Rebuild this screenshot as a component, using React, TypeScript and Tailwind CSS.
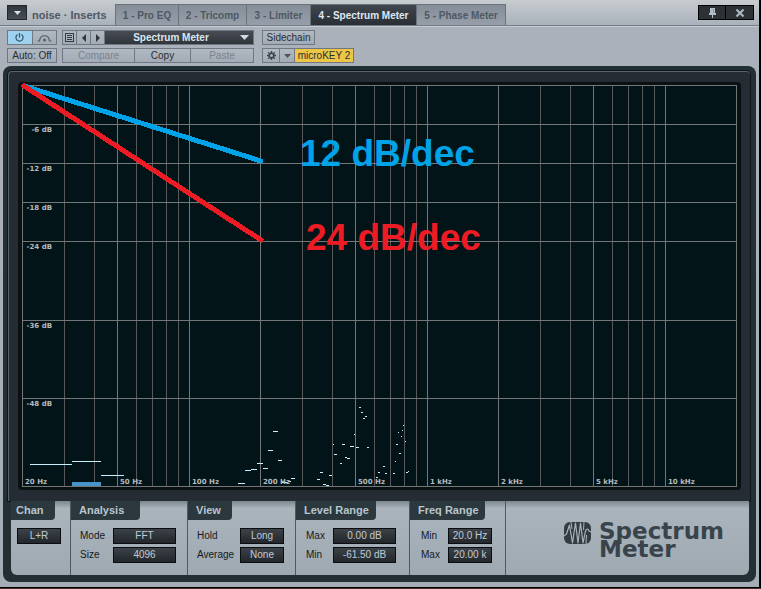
import { clsx } from "clsx";

const inserts = [
  { name: "1 - Pro EQ", width: "w-[63px]" },
  { name: "2 - Tricomp", width: "w-[68px]" },
  { name: "3 - Limiter", width: "w-[64px]" },
  { name: "4 - Spectrum Meter", width: "w-[106px]", active: true },
  { name: "5 - Phase Meter", width: "w-[89px]" },
];

const majorFreqs = [20, 50, 100, 200, 500, 1000, 2000, 5000, 10000, 20000];
const minorFreqs = [
  30, 40, 60, 70, 80, 90, 300, 400, 600, 700, 800, 900, 3000, 4000, 6000, 7000,
  8000, 9000,
];
const levels = [0, -6, -12, -18, -24, -36, -48, -61.5];

// measured bins: [start, y, length]
const trace = [
  [30, 464, 42], [72, 461, 29], [101, 475, 23], [238, 483, 7], [245, 470, 6],
  [251, 469, 6], [257, 463, 6], [263, 468, 5], [268, 450, 5], [273, 431, 5],
  [278, 460, 4], [282, 482, 6], [288, 481, 3], [291, 478, 4], [317, 479, 3],
  [320, 472, 3], [323, 484, 3], [326, 485, 3], [329, 475, 3], [333, 444, 1],
  [334, 454, 3], [340, 463, 2], [342, 444, 3], [345, 457, 2], [347, 458, 3],
  [350, 446, 4], [354, 434, 1], [356, 447, 3], [359, 407, 2], [361, 412, 2],
  [363, 418, 2], [365, 416, 2], [367, 447, 2], [376, 477, 2], [378, 472, 2],
  [383, 466, 2], [385, 473, 2], [393, 473, 2], [395, 461, 1], [396, 444, 2],
  [398, 432, 1], [399, 453, 2], [401, 436, 1], [402, 430, 1], [403, 425, 1],
  [405, 441, 1], [406, 472, 2], [408, 471, 1],
];

const freqX = (hz: number) => Math.ceil(22 + (714 * Math.log10(hz / 20)) / 3 - 0.01);
const levelY = (db: number) => Math.round(85 - db * 6.52);

const freqLabel = (hz: number) => (hz < 1000 ? `${hz} Hz` : `${hz / 1000} kHz`);

function Spectrum() {
  return (
    <svg
      viewBox="22 85 715 402"
      className="block h-auto w-full overflow-visible font-['DejaVu_Sans',sans-serif]"
    >
      <rect x="22" y="85" width="715" height="402" fill="#021417" />
      <g fill="#575959">
        {minorFreqs.map((hz) => (
          <rect key={hz} x={freqX(hz)} y="85" width="1" height="402" />
        ))}
      </g>
      <g fill="#747777">
        {levels.map((db) => (
          <rect key={db} x="22" y={levelY(db)} width="715" height="1" />
        ))}
        {majorFreqs.map((hz) => (
          <rect key={hz} x={freqX(hz)} y="85" width="1" height="402" />
        ))}
      </g>
      <rect x="72" y="482" width="29" height="4" fill="#4595c8" />
      <g fill="#c9efff">
        {trace.map(([x, y, w]) => (
          <rect key={x} x={x} y={y} width={w} height="1" />
        ))}
      </g>
      <g fill="#b4bbbf" fontSize="7" fontWeight="bold">
        {levels.slice(1, -1).map((db) => (
          <text key={db} x="52" y={levelY(db) + 8} textAnchor="end">
            {db} dB
          </text>
        ))}
        {majorFreqs.slice(0, -1).map((hz) => (
          <text key={hz} x={freqX(hz) + 3} y="484">
            {freqLabel(hz)}
          </text>
        ))}
      </g>
      <g strokeWidth="5" strokeLinecap="round" shapeRendering="crispEdges">
        <path d="M24 86L261 161" stroke="#00a2e8" />
        <path d="M24 86L261 240" stroke="#ed1c24" />
      </g>
      <g fontSize="37" fontWeight="bold" className="font-['Liberation_Sans',Arial,sans-serif]">
        <text x="300" y="166" fill="#00a2e8">12 dB/dec</text>
        <text x="306" y="250" fill="#ed1c24">24 dB/dec</text>
      </g>
    </svg>
  );
}

function Titlebar() {
  return (
    <header className="flex h-[26px] items-center border-b border-[#737b84] bg-linear-to-b from-[#c7cccf] to-[#a9b1bb] pr-[5px] pl-[7px]">
      <button
        aria-label="Window menu"
        className="flex h-[15px] w-5 items-center justify-center border border-[#23272c] bg-linear-to-b from-[#32363d] to-[#484d55]"
      >
        <svg width="7" height="4" viewBox="0 0 7 4">
          <path d="M0 0H7L3.5 4Z" fill="#d5e0e8" />
        </svg>
      </button>
      <h1 className="w-[88px] pt-1 pl-[5px] text-[11px] leading-4 font-bold whitespace-nowrap text-[#505861]">
        noise · Inserts
      </h1>
      <nav className="flex h-[21px] self-end border-t border-l border-[#6b737d]">
        {inserts.map((tab) => (
          <button
            key={tab.name}
            className={clsx(
              "border-r border-[#69717b] text-[10px] font-bold whitespace-nowrap",
              tab.width,
              tab.active
                ? "bg-linear-to-b from-[#41464e] to-[#2a2e35] text-[#dfe9f1]"
                : "bg-linear-to-b from-[#858e99] to-[#959ea9] text-[#505862]"
            )}
          >
            {tab.name}
          </button>
        ))}
      </nav>
      <div className="ml-auto flex h-[15px] divide-x divide-black border border-black bg-[#2c3136]">
        <button aria-label="Pin" className="flex w-[27px] items-center justify-center">
          <svg width="7" height="10" viewBox="0 0 7 10" fill="#b2bdc5">
            <path d="M1 0H6V5H7V7H0V5H1Z" />
            <path d="M3 7H4V10H3Z" />
            <path d="M4 1H5V5H4Z" fill="#8a959d" />
          </svg>
        </button>
        <button aria-label="Close" className="flex w-[27px] items-center justify-center">
          <svg width="8" height="8" viewBox="0 0 8 8" stroke="#aeb9c1" strokeWidth="2">
            <path d="M0.5 0.5L7.5 7.5M7.5 0.5L0.5 7.5" />
          </svg>
        </button>
      </div>
    </header>
  );
}

const group =
  "flex h-[15px] divide-x divide-[#6f7782] border border-[#6f7782] bg-linear-to-b from-[#b0b8c2] to-[#a3abb6]";

function Toolbar() {
  return (
    <div className="flex border-t border-[#c5cbd1] px-[7px] pt-[3px] pb-[3px] text-[10px] text-[#292e34]">
      <div className="mr-[5px] flex w-[50px] flex-col gap-[3px]">
        <div className={group}>
          <button aria-label="Power" className="flex flex-1 items-center justify-center bg-[#9ed2ef]">
            <svg width="9" height="9" viewBox="0 0 9 9" fill="none" stroke="#35556a" strokeWidth="1.2">
              <path d="M2.6 1.4A3.6 3.6 0 1 0 6.4 1.4M4.5 0V4.5" />
            </svg>
          </button>
          <button aria-label="Bypass" className="flex flex-1 items-center justify-center">
            <svg width="15" height="8" viewBox="0 0 15 8" fill="none" stroke="#555d67" strokeWidth="1.2">
              <path d="M0.5 7H2.5C3 0 12 0 12.5 7H14.5" />
              <circle cx="7.5" cy="6" r="1.5" fill="#555d67" stroke="none" />
            </svg>
          </button>
        </div>
        <button className="h-[15px] border border-[#6f7782] bg-linear-to-b from-[#b0b8c2] to-[#a3abb6] leading-3 whitespace-nowrap">
          Auto: Off
        </button>
      </div>

      <div className="mr-2 flex w-48 flex-col gap-[3px]">
        <div className={group}>
          <button aria-label="Preset list" className="flex w-[14px] items-center justify-center">
            <svg width="9" height="9" viewBox="0 0 9 9" fill="#333a42">
              <path d="M0 0H9V9H0ZM1 1V8H8V1Z" fillRule="evenodd" />
              <path d="M2 2H7V3H2ZM2 4H7V5H2ZM2 6H7V7H2Z" />
            </svg>
          </button>
          <button aria-label="Previous preset" className="flex w-[14px] items-center justify-center">
            <svg width="4" height="8" viewBox="0 0 4 8">
              <path d="M4 0V8L0 4Z" fill="#30363d" />
            </svg>
          </button>
          <button aria-label="Next preset" className="flex w-[14px] items-center justify-center">
            <svg width="4" height="8" viewBox="0 0 4 8">
              <path d="M0 0V8L4 4Z" fill="#30363d" />
            </svg>
          </button>
          <div className="relative flex-1 bg-linear-to-b from-[#484d55] to-[#30343b]">
            <select
              aria-label="Preset"
              className="block h-[13px] w-full appearance-none pr-4 text-[10px] leading-3 font-bold text-[#dce7ef] [text-align-last:center]"
            >
              <option>Spectrum Meter</option>
            </select>
            <svg
              width="9"
              height="5"
              viewBox="0 0 9 5"
              className="pointer-events-none absolute top-1 right-1"
            >
              <path d="M0 0H9L4.5 5Z" fill="#d0dbe3" />
            </svg>
          </div>
        </div>
        <div className={group}>
          <button disabled className="w-[72px] leading-3 text-[#7b838e]">Compare</button>
          <button className="w-14 leading-3">Copy</button>
          <button disabled className="flex-1 leading-3 text-[#7b838e]">Paste</button>
        </div>
      </div>

      <div className="flex flex-col items-start gap-[3px]">
        <button className="h-[15px] w-[53px] border border-[#6f7782] bg-linear-to-b from-[#b0b8c2] to-[#a3abb6] leading-3">
          Sidechain
        </button>
        <div className={group}>
          <button aria-label="Controller settings" className="flex w-[17px] items-center justify-center">
            <svg width="9" height="9" viewBox="0 0 9 9" stroke="#3c434b" fill="none">
              <circle cx="4.5" cy="4.5" r="2.3" strokeWidth="1.6" />
              <path
                d="M4.5 0V2M4.5 7V9M0 4.5H2M7 4.5H9M1.2 1.2L2.6 2.6M6.4 6.4L7.8 7.8M7.8 1.2L6.4 2.6M2.6 6.4L1.2 7.8"
                strokeWidth="1.3"
              />
            </svg>
          </button>
          <button aria-label="Controller menu" className="flex w-[15px] items-center justify-center">
            <svg width="7" height="4" viewBox="0 0 7 4">
              <path d="M0 0H7L3.5 4Z" fill="#4c535c" />
            </svg>
          </button>
          <button className="w-[58px] bg-[#edc646] leading-3 whitespace-nowrap">microKEY 2</button>
        </div>
      </div>
    </div>
  );
}

const valueBox =
  "block h-4 appearance-none border border-[#0b0e10] bg-linear-to-b from-[#3c4248] to-[#23272b] text-center text-[10px] leading-3 text-[#c0cbd4] [text-align-last:center]";

type FieldProps = { label: string; value: string; width: string; numeric?: boolean };

function Field({ label, value, width, numeric }: FieldProps) {
  return (
    <label className="flex items-center justify-between text-[10px] leading-4 text-[#15191d]">
      {label}
      {numeric ? (
        <input defaultValue={value} className={clsx(valueBox, width, "pb-px")} />
      ) : (
        <select className={clsx(valueBox, width)}>
          <option>{value}</option>
        </select>
      )}
    </label>
  );
}

type SectionProps = {
  title: string;
  width: string;
  tab: string;
  pad: string;
  children: React.ReactNode;
};

function Section({ title, width, tab, pad, children }: SectionProps) {
  return (
    <section className={clsx("border-r border-[#4e5962]", width)}>
      <h2
        className={clsx(
          "h-[19px] rounded-br-sm bg-[#2b383d] text-[11px] leading-[19px] font-bold whitespace-nowrap text-[#b9c6cd]",
          tab
        )}
      >
        {title}
      </h2>
      <div className={clsx("flex flex-col gap-[3px] pt-2", pad)}>{children}</div>
    </section>
  );
}

function Logo() {
  return (
    <div className="ml-auto flex gap-2 pt-[21px] pr-[25px]">
      <svg width="27" height="22" viewBox="0 0 27 22">
        <rect width="27" height="22" rx="6" fill="#343b42" />
        <path
          d="M0 14L2.500 12L5.500 3L8.500 21L11.500 1L14 21L16.500 1L19 21L21.500 9Q23.500 5 25 9L27 10"
          fill="none"
          stroke="#a9b2bb"
          strokeWidth="1.2"
          strokeLinejoin="round"
        />
        <path d="M7 0L8 7M20 0L19.500 8M22.500 13L22 22" stroke="#a9b2bb" strokeWidth="1" />
      </svg>
      <div className="font-['DejaVu_Sans',sans-serif] text-[23px] leading-[18px] font-bold text-[#39434a]">
        <div>Spectrum</div>
        <div>Meter</div>
      </div>
    </div>
  );
}

export default function App() {
  return (
    <div className="min-h-screen bg-[#3c3029] font-['Liberation_Sans',Arial,sans-serif]">
      <main className="border-r-2 border-b border-black bg-[#aab1bb]">
        <Titlebar />
        <Toolbar />
        <div className="bg-linear-to-b from-[#aab1bb] to-[#a4adb6] px-[3px] pb-[5px]">
          <div className="rounded-lg bg-[#222f33] pt-[5px] pr-[6px] pb-[7px] pl-[5px]">
            <div className="rounded-t-sm border-t border-l border-[#59646a] bg-[#262c33] pt-[10px] pr-[9px] pb-[11px] pl-[9px] shadow-[0_0_0_1px_#0e1619]">
              <div className="rounded-sm bg-[#0b1013] px-1 py-[3px]">
                <Spectrum />
              </div>
            </div>
            <footer className="mr-px ml-[3px] flex h-[74px] overflow-hidden rounded-b-md bg-linear-to-b from-[#7e878f] via-[#aab4bd] via-10% to-[#9fa9b2]">
              <Section title="Chan" width="w-[60px]" tab="w-11 pl-[5px]" pad="px-[6px]">
                <select aria-label="Channel" className={clsx(valueBox, "w-11")}>
                  <option>L+R</option>
                </select>
              </Section>
              <Section title="Analysis" width="w-[117px]" tab="w-[69px] pl-2" pad="pr-[11px] pl-[9px]">
                <Field label="Mode" value="FFT" width="w-[63px]" />
                <Field label="Size" value="4096" width="w-[63px]" />
              </Section>
              <Section title="View" width="w-[108px]" tab="w-11 pl-2" pad="pr-[11px] pl-[9px]">
                <Field label="Hold" value="Long" width="w-11" />
                <Field label="Average" value="None" width="w-11" />
              </Section>
              <Section title="Level Range" width="w-[114px]" tab="w-20 pl-2" pad="pr-[13px] pl-[10px]">
                <Field label="Max" value="0.00 dB" width="w-[63px]" numeric />
                <Field label="Min" value="-61.50 dB" width="w-[63px]" numeric />
              </Section>
              <Section title="Freq Range" width="w-[96px]" tab="w-[75px] pl-2" pad="pr-[13px] pl-[11px]">
                <Field label="Min" value="20.0 Hz" width="w-11" numeric />
                <Field label="Max" value="20.00 k" width="w-11" numeric />
              </Section>
              <Logo />
            </footer>
          </div>
        </div>
      </main>
    </div>
  );
}
